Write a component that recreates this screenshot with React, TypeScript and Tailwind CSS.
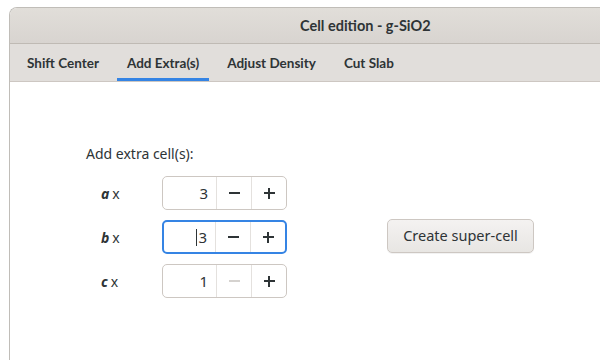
const font = { fontFamily: '"Noto Sans", "Open Sans", sans-serif' };
const boldFont = { fontFamily: 'Lato, "Noto Sans", sans-serif' };

const tabs = ["Shift Center", "Add Extra(s)", "Adjust Density", "Cut Slab"];

function SpinRow({
  axis,
  value,
  focused,
  minusDisabled,
}: {
  axis: string;
  value: string;
  focused?: boolean;
  minusDisabled?: boolean;
}) {
  return (
    <div className="flex items-center">
      <div className="w-[76px] pl-[15px] text-[14px] text-[#2e3436]">
        <span className="font-bold italic">{axis}</span>
        <span className="ml-[3px]">x</span>
      </div>
      <div
        className={
          "flex h-[34px] w-[125px] overflow-hidden rounded-[5px] bg-white " +
          (focused ? "border-2 border-[#3584e4]" : "border border-[#cdc7c2]")
        }
      >
        <div className="flex flex-1 items-center justify-end pr-[8px] text-[15px] text-[#2e3436]">
          {focused && <span className="mr-[1px] h-[17px] w-px bg-[#2e3436]" />}
          {value}
        </div>
        <div
          className={
            "flex w-[35px] items-center justify-center border-l border-[#e4e1de] " +
            (minusDisabled ? "text-[#d5d2cf]" : "text-[#2e3436]")
          }
        >
          <span className="h-[2px] w-[11px] bg-current" />
        </div>
        <div className="relative flex w-[35px] items-center justify-center border-l border-[#e4e1de] text-[#2e3436]">
          <span className="h-[2px] w-[11px] bg-current" />
          <span className="absolute h-[11px] w-[2px] bg-current" />
        </div>
      </div>
    </div>
  );
}

export default function App() {
  return (
    <div className="h-[360px] w-[600px] overflow-hidden bg-white pt-[7px] pl-[9px]" style={font}>
      <div className="flex h-[400px] w-[700px] flex-col overflow-hidden rounded-tl-[8px] border-t border-l border-[#c0bdb8] bg-white">
        <div
          className="flex h-[36px] items-center border-b border-[#bfbab4] bg-gradient-to-b from-[#e1ded9] to-[#d8d4d0] pl-[290px] text-[14.5px] font-bold text-[#2e3436]"
          style={boldFont}
        >
          Cell edition - g-SiO2
        </div>
        <div
          className="flex h-[38px] items-stretch gap-[8px] border-b border-[#cdc7c2] bg-[#e1dedb] pl-[7px] text-[13.5px] font-bold text-[#2e3436]"
          style={boldFont}
        >
          {tabs.map((tab, i) => (
            <div key={tab} className="flex flex-col items-stretch">
              <div className="flex flex-1 items-center px-[10px] pt-[5px]">{tab}</div>
              <div className={"h-[3px] " + (i === 1 ? "bg-[#3584e4]" : "")} />
            </div>
          ))}
        </div>
        <div className="flex pl-[76px] pt-[61px]">
          <div className="flex flex-col">
            <div className="mb-[12px] text-[14px] text-[#2e3436]">Add extra cell(s):</div>
            <div className="flex flex-col gap-[10px]">
              <SpinRow axis="a" value="3" />
              <SpinRow axis="b" value="3" focused />
              <SpinRow axis="c" value="1" minusDisabled />
            </div>
          </div>
          <div className="ml-[100px] mt-[76px]">
            <button className="h-[34px] w-[147px] rounded-[5px] border border-[#cdc7c2] bg-gradient-to-b from-[#f4f2f1] to-[#e8e6e3] text-[14.5px] text-[#2e3436] shadow-[0_1px_0_rgba(0,0,0,0.05)]">
              Create super-cell
            </button>
          </div>
        </div>
      </div>
    </div>
  );
}
